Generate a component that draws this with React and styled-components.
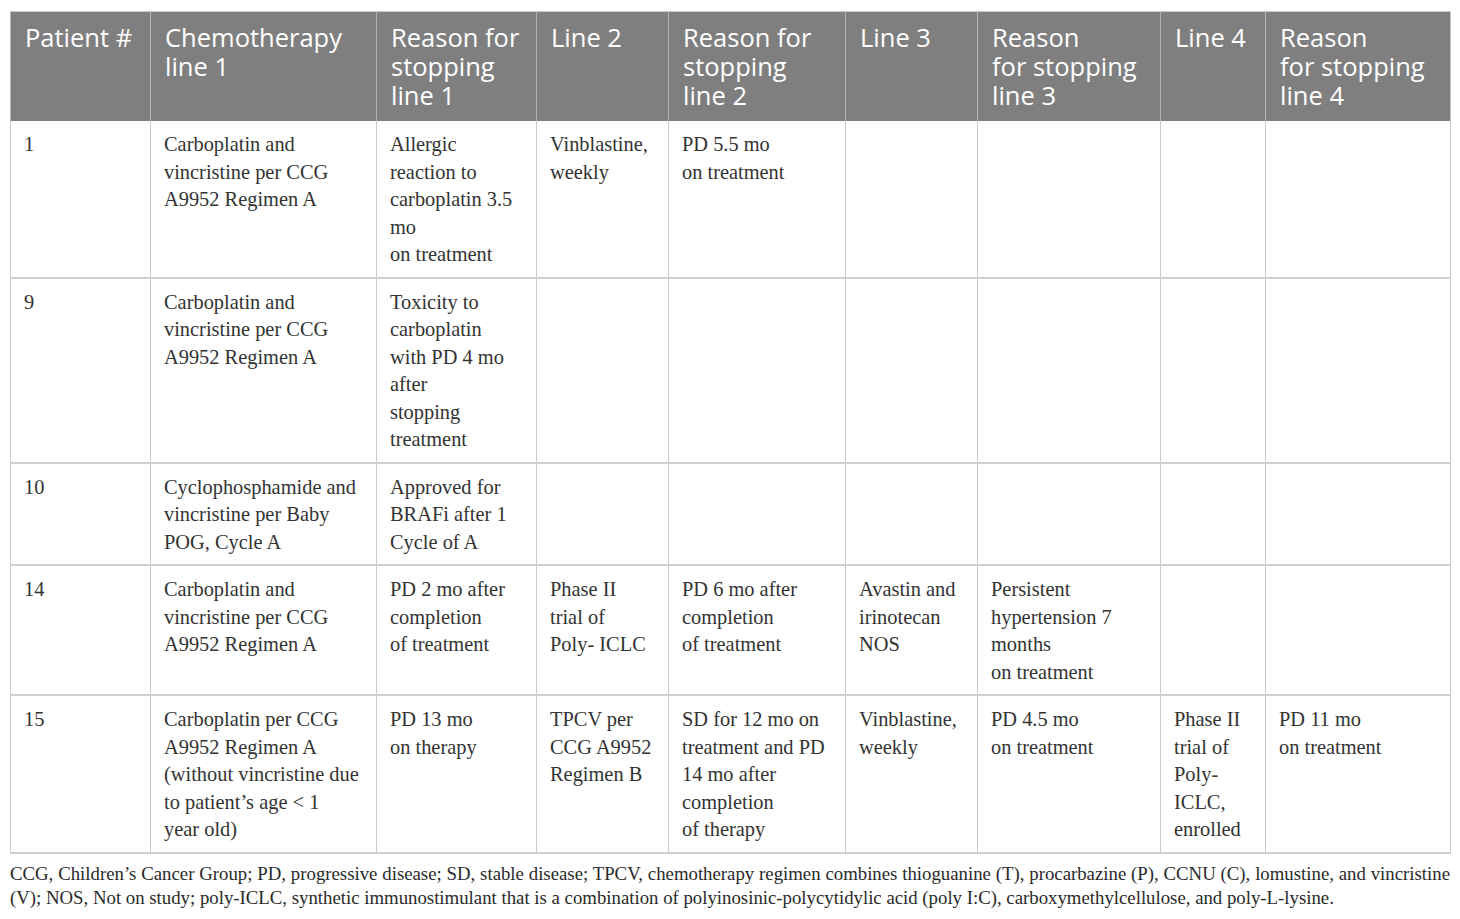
import React from 'react'
import styled, { createGlobalStyle } from 'styled-components'

const GlobalStyle = createGlobalStyle`
  body {
    margin: 0;
    background: #fff;
  }
`

const Page = styled.div`
  padding: 11px 10px 0 10px;
  width: 1440px;
`

const Table = styled.table`
  width: 1440px;
  table-layout: fixed;
  border-collapse: collapse;
  border: 1px solid #c9c9c9;
`

const HeadCell = styled.th`
  background: #7f7f7f;
  color: #fff;
  font-family: 'Open Sans', 'Noto Sans', sans-serif;
  font-weight: 400;
  font-size: 25.5px;
  line-height: 29px;
  text-align: left;
  vertical-align: top;
  padding: 11px 14px 11px 14px;
  border-left: 1px solid #b5b5b5;
  white-space: nowrap;
  height: 87px;
`

const Row = styled.tr`
  border-bottom: 2px solid #d0d0d0;
`

const Cell = styled.td`
  font-family: 'Liberation Serif', 'Times New Roman', serif;
  font-size: 20.4px;
  line-height: 27.5px;
  color: #333;
  vertical-align: top;
  padding: 10px 12px 8px 13px;
  border-left: 1px solid #c9c9c9;
  white-space: nowrap;
`

const Line = styled.div``

const Footnote = styled.div`
  font-family: 'Liberation Serif', 'Times New Roman', serif;
  font-size: 18.8px;
  line-height: 24px;
  color: #2a2a2a;
  padding-top: 8px;
`

const JustifiedLine = styled.div`
  text-align: justify;
  text-align-last: justify;
  white-space: nowrap;
`

const columns = [140, 226, 160, 132, 177, 132, 183, 105, 185]

const headers = [
  ['Patient #'],
  ['Chemotherapy', 'line 1'],
  ['Reason for', 'stopping', 'line 1'],
  ['Line 2'],
  ['Reason for', 'stopping', 'line 2'],
  ['Line 3'],
  ['Reason', 'for stopping', 'line 3'],
  ['Line 4'],
  ['Reason', 'for stopping', 'line 4'],
]

const rows = [
  [
    ['1'],
    ['Carboplatin and', 'vincristine per CCG', 'A9952 Regimen A'],
    ['Allergic', 'reaction to', 'carboplatin 3.5', 'mo', 'on treatment'],
    ['Vinblastine,', 'weekly'],
    ['PD 5.5 mo', 'on treatment'],
    [], [], [], [],
  ],
  [
    ['9'],
    ['Carboplatin and', 'vincristine per CCG', 'A9952 Regimen A'],
    ['Toxicity to', 'carboplatin', 'with PD 4 mo', 'after', 'stopping', 'treatment'],
    [], [], [], [], [], [],
  ],
  [
    ['10'],
    ['Cyclophosphamide and', 'vincristine per Baby', 'POG, Cycle A'],
    ['Approved for', 'BRAFi after 1', 'Cycle of A'],
    [], [], [], [], [], [],
  ],
  [
    ['14'],
    ['Carboplatin and', 'vincristine per CCG', 'A9952 Regimen A'],
    ['PD 2 mo after', 'completion', 'of treatment'],
    ['Phase II', 'trial of', 'Poly- ICLC'],
    ['PD 6 mo after', 'completion', 'of treatment'],
    ['Avastin and', 'irinotecan', 'NOS'],
    ['Persistent', 'hypertension 7', 'months', 'on treatment'],
    [], [],
  ],
  [
    ['15'],
    ['Carboplatin per CCG', 'A9952 Regimen A', '(without vincristine due', 'to patient\u2019s age < 1', 'year old)'],
    ['PD 13 mo', 'on therapy'],
    ['TPCV per', 'CCG A9952', 'Regimen B'],
    ['SD for 12 mo on', 'treatment and PD', '14 mo after', 'completion', 'of therapy'],
    ['Vinblastine,', 'weekly'],
    ['PD 4.5 mo', 'on treatment'],
    ['Phase II', 'trial of', 'Poly-', 'ICLC,', 'enrolled'],
    ['PD 11 mo', 'on treatment'],
  ],
]

export default function App() {
  return (
    <Page>
      <GlobalStyle />
      <Table>
        <colgroup>
          {columns.map((w, i) => (
            <col key={i} style={{ width: w }} />
          ))}
        </colgroup>
        <thead>
          <tr>
            {headers.map((lines, i) => (
              <HeadCell key={i}>
                {lines.map((l, j) => (
                  <Line key={j}>{l}</Line>
                ))}
              </HeadCell>
            ))}
          </tr>
        </thead>
        <tbody>
          {rows.map((row, r) => (
            <Row key={r}>
              {row.map((lines, c) => (
                <Cell key={c}>
                  {lines.map((l, j) => (
                    <Line key={j}>{l}</Line>
                  ))}
                </Cell>
              ))}
            </Row>
          ))}
        </tbody>
      </Table>
      <Footnote>
        <JustifiedLine>
          CCG, Children’s Cancer Group; PD, progressive disease; SD, stable disease; TPCV, chemotherapy regimen combines thioguanine (T), procarbazine (P), CCNU (C), lomustine, and vincristine
        </JustifiedLine>
        <div>
          (V); NOS, Not on study; poly-ICLC, synthetic immunostimulant that is a combination of polyinosinic-polycytidylic acid (poly I:C), carboxymethylcellulose, and poly-L-lysine.
        </div>
      </Footnote>
    </Page>
  )
}
